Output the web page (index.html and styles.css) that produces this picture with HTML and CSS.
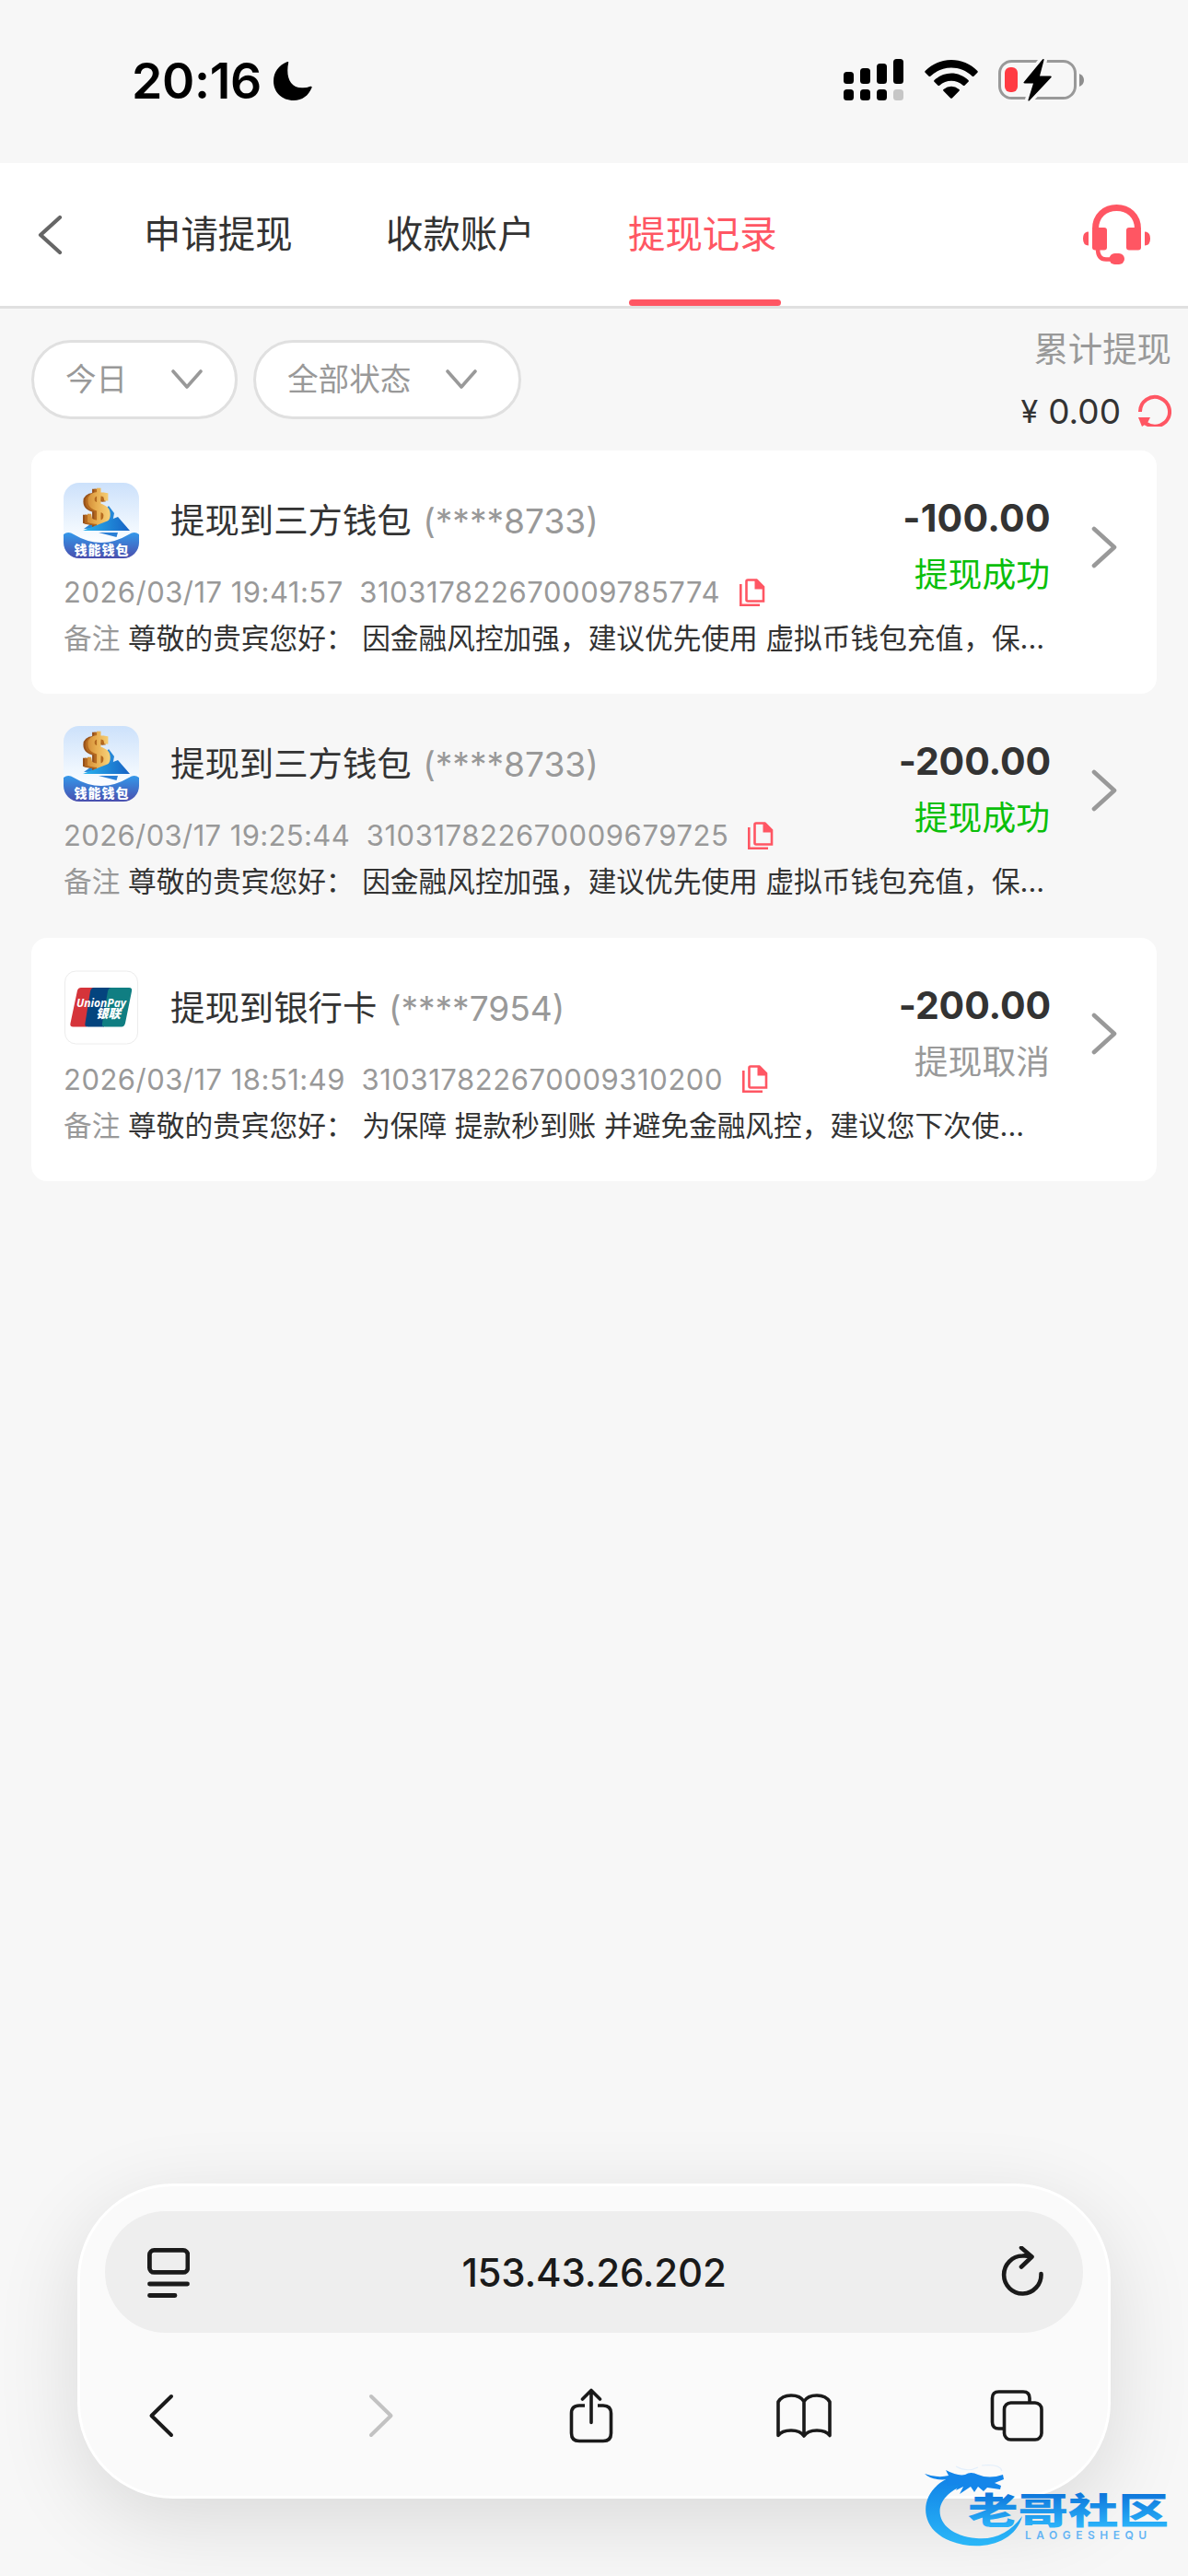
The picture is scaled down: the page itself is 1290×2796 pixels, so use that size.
FILE: index.html
```html
<!DOCTYPE html>
<html lang="zh-CN">
<head>
<meta charset="utf-8">
<title>提现记录</title>
<link rel="stylesheet" href="styles.css">
</head>
<body>
<svg class="defs" width="0" height="0" aria-hidden="true">
  <defs>
    <linearGradient id="sky" x1="0" y1="0" x2="0" y2="1"><stop offset="0" stop-color="#cce1fb"/><stop offset=".75" stop-color="#fafdff"/></linearGradient>
    <linearGradient id="wave" x1="0" y1="0" x2="0" y2="1"><stop offset="0" stop-color="#3498ea"/><stop offset="1" stop-color="#4a4fae"/></linearGradient>
    <linearGradient id="gold" x1="0" y1="0" x2="1" y2="0"><stop offset="0" stop-color="#d08a35"/><stop offset=".4" stop-color="#e8ae50"/><stop offset="1" stop-color="#f8d47c"/></linearGradient>
    <linearGradient id="sail" x1="0" y1="0" x2="1" y2="0"><stop offset="0" stop-color="#29b4ee"/><stop offset="1" stop-color="#1762c4"/></linearGradient>
    <linearGradient id="brand" gradientUnits="userSpaceOnUse" x1="0" y1="10" x2="0" y2="90"><stop offset="0" stop-color="#0f7fe6"/><stop offset="1" stop-color="#2bb8f8"/></linearGradient>
    <linearGradient id="brandText" gradientUnits="userSpaceOnUse" x1="0" y1="34" x2="0" y2="69"><stop offset="0" stop-color="#0f78dc"/><stop offset="1" stop-color="#2bb4fa"/></linearGradient>
    <symbol id="wallet" viewBox="0 0 82 82">
      <rect width="82" height="82" rx="17" fill="url(#sky)"/>
      <path d="M49 25l6 8-3 16-30 1 14-10z" fill="#2587d8"/>
      <g transform="translate(-6 -3.500) scale(1.120 1.060)">
        <text class="coin" x="35" y="46" fill="#96511b" stroke="#96511b" text-anchor="middle">$</text>
        <text class="coin" x="37" y="45.500" fill="#b56a20" stroke="#b56a20" text-anchor="middle">$</text>
        <text class="coin" x="39.500" y="45" fill="url(#gold)" stroke="url(#gold)" text-anchor="middle">$</text>
      </g>
      <path d="M21 52l38-15 13 15z" fill="url(#sail)"/>
      <path d="M38 54h21l-1.500 5z" fill="#2a7fd6"/>
      <path d="M0 56q5-4 11 0q30 18 60 0q6-4 11 0v9a17 17 0 0 1-17 17H17A17 17 0 0 1 0 65z" fill="url(#wave)"/>
      <text class="wallet-name" x="11.500" y="78.300" fill="#fff" textLength="59">钱能钱包</text>
    </symbol>
    <symbol id="copy" viewBox="0 0 28 30">
      <path d="M9 1.500H18.500L26 9V24.500H9q-1.500 0-1.500-1.500V3q0-1.500 1.500-1.500z" fill="none" stroke="#ff5663" stroke-width="2.600"/>
      <path d="M16.500 1h3L27 9v2.500H16.500z" fill="#ff5663"/>
      <path d="M1.300 6v22.700h20.700" fill="none" stroke="#ff5663" stroke-width="2.600"/>
    </symbol>
    <symbol id="next" viewBox="0 0 28 46"><path d="M3 3L25 23L3 43" fill="none" stroke="#999" stroke-width="4.600" stroke-linecap="round" stroke-linejoin="round"/></symbol>
    <symbol id="down" viewBox="0 0 34 22"><path d="M2 2L17 19L32 2" fill="none" stroke="#999" stroke-width="3.600" stroke-linecap="round" stroke-linejoin="round"/></symbol>
  </defs>
</svg>
<div class="screen">
  <div class="status">
    <span class="clock">20:16</span>
    <svg class="moon" width="42" height="42" viewBox="0 0 42 42"><path d="M16.200 1C13 16 18 29 32 28.300q4 0 8-1.500q2.200-.5 1.500 1.500C38 37 31 42 22 42C9 42 0 33 0 21C0 11 6 3.500 14.500.2q2-.8 1.700.8z"/></svg>
    <svg class="signal" width="65" height="46" viewBox="0 0 65 46"><g><rect x="0" y="14" width="11" height="13" rx="3.500"/><rect x="18" y="10" width="11" height="17" rx="3.500"/><rect x="36" y="5" width="11" height="22" rx="3.500"/><rect x="54" y="0" width="11" height="27" rx="3.500"/><rect x="0" y="33" width="11" height="12" rx="3.500"/><rect x="18" y="33" width="11" height="12" rx="3.500"/><rect x="36" y="33" width="11" height="12" rx="3.500"/><rect x="54" y="33" width="11" height="12" rx="3.500" fill="#c6c6c6"/></g></svg>
    <svg class="wifi" width="58" height="42" viewBox="0 0 58 42"><path d="M.6 12C16-4 42-4 57.400 12q.8.800 0 1.700l-4 4q-.8.800-1.700 0C39 5.500 19 5.500 6.300 17.700q-.9.800-1.700 0l-4-4q-.8-.9 0-1.700z"/><path d="M10.500 22C21 12 37 12 47.500 22q.8.900 0 1.700l-4 4q-.8.700-1.700 0C34.500 21 23.500 21 16.200 27.700q-.9.700-1.700 0l-4-4q-.8-.8 0-1.700z"/><path d="M20.500 32q8.500-6.500 17 0q.9.800 0 1.700l-7.600 7.700q-.9.900-1.800 0l-7.600-7.700q-.9-.9 0-1.700z"/></svg>
    <svg class="battery" width="94" height="46" viewBox="0 0 94 46"><rect x="1.500" y="2.500" width="82" height="40" rx="13" fill="none" stroke="#999" stroke-width="3"/><path d="M88 16q5 2 5 7t-5 7z" fill="#8e8e8e"/><rect x="7" y="9" width="14" height="27" rx="6" fill="#ff3b43"/><path d="M48 .500q2-1.500 1.500 1L45 18.500h11.500q2 0 .8 1.700L34 45q-2 1.500-1.400-1L38 26.500H29q-2.500 0-1-1.700z" fill="#000" stroke="#f7f7f7" stroke-width="7" paint-order="stroke"/></svg>
  </div>
  <header class="nav">
    <svg class="back" width="27" height="44" viewBox="0 0 27 44"><path d="M24 3L3 22L24 41" fill="none" stroke="#666" stroke-width="4.200" stroke-linecap="round" stroke-linejoin="round"/></svg>
    <nav class="tabs"><a class="tab">申请提现</a><a class="tab">收款账户</a><a class="tab active">提现记录</a></nav>
    <svg class="service" width="74" height="66" viewBox="0 0 74 66" fill="#ff5663"><path d="M14.500 27V26.500C14.500 12 25 3.500 37.500 3.500S60.500 12 60.500 26.500V27" fill="none" stroke="#ff5663" stroke-width="7"/><rect x="11" y="25" width="16" height="24.500" rx="3"/><rect x="48" y="25" width="16" height="24.500" rx="3"/><path d="M7 29.500v15Q1 44.500 1 37T7 29.500zM68 29.500v15q6 0 6-7.500T68 29.500z"/><path d="M17 48q0 11.500 9 11.500h7" fill="none" stroke="#ff5663" stroke-width="4.500"/><rect x="29.500" y="53" width="16.500" height="12" rx="6"/></svg>
  </header>
  <section class="filters">
    <button class="pill today"><span>今日</span><svg width="34" height="22"><use href="#down"/></svg></button>
    <button class="pill state"><span>全部状态</span><svg width="34" height="22"><use href="#down"/></svg></button>
    <div class="total">
      <div class="total-label">累计提现</div>
      <div class="total-value"><span class="yen">¥</span><span class="sum">0.00</span><svg width="36" height="36" viewBox="0 0 36 36"><path d="M2 20A16 16 0 1 1 29.500 31Q19 40 7 32" fill="none" stroke="#ff5663" stroke-width="4"/><path d="M0 26h13L10 32l-6 4z" fill="#ff5663"/></svg></div>
    </div>
  </section>
  <main class="list">
    <article class="record white">
      <svg class="logo" width="82" height="82"><use href="#wallet"/></svg>
      <h2 class="title">提现到三方钱包 <span class="tail">(****8733)</span></h2>
      <div class="side"><b class="amount wide">-100.00</b><span class="result ok">提现成功</span></div>
      <svg class="next" width="28" height="46"><use href="#next"/></svg>
      <p class="meta"><span class="time">2026/03/17 19:41:57</span><span class="order">310317822670009785774</span><svg width="28" height="30"><use href="#copy"/></svg></p>
      <p class="note"><span>备注</span> 尊敬的贵宾您好： 因金融风控加强，建议优先使用 虚拟币钱包充值，保...</p>
    </article>
    <article class="record">
      <svg class="logo" width="82" height="82"><use href="#wallet"/></svg>
      <h2 class="title">提现到三方钱包 <span class="tail">(****8733)</span></h2>
      <div class="side"><b class="amount">-200.00</b><span class="result ok">提现成功</span></div>
      <svg class="next" width="28" height="46"><use href="#next"/></svg>
      <p class="meta"><span class="time tight">2026/03/17 19:25:44</span><span class="order">310317822670009679725</span><svg width="28" height="30"><use href="#copy"/></svg></p>
      <p class="note"><span>备注</span> 尊敬的贵宾您好： 因金融风控加强，建议优先使用 虚拟币钱包充值，保...</p>
    </article>
    <article class="record white">
      <svg class="logo" width="82" height="82" viewBox="0 0 82 82"><rect x="1.500" y="1" width="79" height="79" rx="12" fill="#fff" stroke="#ececec"/><path d="M19 19H34L25 61.500H10.500q-4 0-3-4L15 22q1-3 4-3z" fill="#d5343a"/><path d="M33 19H53L44 61.500H26.500q-4 0-3-4L29 23q1-4 4-4z" fill="#04447e"/><path d="M52 19H71q4 0 3 4L67 57.500q-1 4-4 4H45q-4 0-3-4L48 23q1-4 4-4z" fill="#107e82"/><text class="up-latin" x="14" y="40" fill="#fff" textLength="54" lengthAdjust="spacingAndGlyphs">UnionPay</text><text class="up-cn" x="35" y="51.500" fill="#fff">银联</text></svg>
      <h2 class="title">提现到银行卡 <span class="tail">(****7954)</span></h2>
      <div class="side"><b class="amount">-200.00</b><span class="result">提现取消</span></div>
      <svg class="next" width="28" height="46"><use href="#next"/></svg>
      <p class="meta"><span class="time">2026/03/17 18:51:49</span><span class="order">310317822670009310200</span><svg width="28" height="30"><use href="#copy"/></svg></p>
      <p class="note"><span>备注</span> 尊敬的贵宾您好： 为保障 提款秒到账 并避免金融风控，建议您下次使...</p>
    </article>
  </main>
  <footer class="browser">
    <div class="address">
      <svg width="46" height="56" viewBox="0 0 46 56" fill="none" stroke="#1a1a1a" stroke-width="4.800" stroke-linecap="round"><rect x="2.400" y="4.400" width="41.500" height="24" rx="5"/><path d="M2.500 41H43.500M2.500 53.500H30"/></svg>
      <span class="host">153.43.26.202</span>
      <svg width="46" height="56" viewBox="0 0 46 56" fill="none" stroke="#1a1a1a" stroke-width="4.600" stroke-linecap="round" stroke-linejoin="round"><path d="M43.500 30A20.200 20.500 0 1 1 23.500 10.500Q28 10 32 11.500M22 1.800L33.500 11.500L22 22.500"/></svg>
    </div>
    <div class="tools">
      <svg width="28" height="54" viewBox="0 0 28 54" fill="none" stroke="#1a1a1a" stroke-width="4" stroke-linecap="round" stroke-linejoin="round"><path d="M25 6L3.500 27L25 48"/></svg>
      <svg class="forward" width="28" height="54" viewBox="0 0 28 54" fill="none" stroke="#c2c2c2" stroke-width="4" stroke-linecap="round" stroke-linejoin="round"><path d="M3 6L24.500 27L3 48"/></svg>
      <svg class="share" width="48" height="60" viewBox="0 0 48 60" fill="none" stroke="#1a1a1a" stroke-width="3.600" stroke-linecap="round" stroke-linejoin="round"><path d="M17 19H11Q2.500 19 2.500 27.500V49Q2.500 57.500 11 57.500H37Q45.500 57.500 45.500 49V27.500Q45.500 19 37 19H31" stroke-linecap="butt"/><path d="M24 37.500V2.500M14.500 12L24 2.500L33.500 12"/></svg>
      <svg class="book" width="60" height="50" viewBox="0 0 60 50" fill="none" stroke="#1a1a1a" stroke-width="3.600" stroke-linejoin="round"><path d="M30 9.500Q26 3 16 3T2 10V46.500Q6 41 16 41T30 47Q34 41 44 41T58 46.500V10Q54 3 44 3T30 9.500V47"/></svg>
      <svg class="windows" width="58" height="56" viewBox="0 0 58 56" fill="none" stroke="#1a1a1a" stroke-width="3.600"><path d="M15 42H9.500Q2.500 42 2.500 35V9Q2.500 2 9.500 2H36Q43 2 43 9V14"/><rect x="15.500" y="14" width="40.500" height="40" rx="7"/></svg>
    </div>
  </footer>
  <svg class="brand" width="270" height="92" viewBox="0 0 270 92"><path d="M36 12C-8 24-10 70 28 84C58 96 98 88 106 57Q86 84 56 81C10 77 2 38 44 23z" fill="url(#brand)"/><path d="M0 11Q14 16 26 13L23 7Q36 14 44 12Q50 8 58 12Q70 17 85 12L86 17L76 21L83 24L82 28L68 26L64 30L58 25L54 31L50 25L38 33L42 25L34 29L38 22L24 24L26 17Q8 19 0 11z" fill="#1486ea"/><path d="M34 3Q46 10 58 4M62 2Q82 0 84 8" fill="none" stroke="#e3effb" stroke-width="1.200"/><text class="brand-cn" x="47" y="65" textLength="218" lengthAdjust="spacingAndGlyphs">老哥社区</text><text class="brand-en" x="109" y="82" textLength="132">LAOGESHEQU</text></svg>
</div>
</body>
</html>
```

FILE: styles.css
```css
* { box-sizing: border-box; margin: 0; padding: 0; }
body { background: #f7f7f7; }
svg { display: block; flex: none; }
.defs { position: absolute; }
.screen {
  position: relative;
  width: 1290px;
  height: 2796px;
  overflow: hidden;
  display: flex;
  flex-direction: column;
  background: #f7f7f7;
  color: #333;
  font-family: Inter, "Noto Sans CJK SC", sans-serif;
}
.status { height: 177px; display: flex; align-items: flex-start; padding: 64px 112px 0 143px; }
.clock { width: 154px; font-size: 53.5px; font-weight: 600; line-height: 48px; letter-spacing: -0.3px; color: #000; white-space: nowrap; }
.moon { margin-top: 3px; }
.signal { margin-left: auto; }
.wifi { margin: 1px 22px 0 23px; }

.nav { height: 158px; background: #fff; border-bottom: 3px solid #e0e0e0; display: flex; align-items: center; padding: 0 41px; }
.tabs { display: flex; height: 155px; gap: 98px; margin-left: 88px; }
.tab { width: 165px; font-size: 40.4px; line-height: 155px; position: relative; white-space: nowrap; }
.active { color: #ff5663; }
.active::after { content: ""; position: absolute; left: 1px; right: -1px; bottom: 0; height: 7px; border-radius: 4px; background: #ff5663; }
.service { margin-left: auto; }

.filters { height: 154px; padding: 20px 18px 0 34px; display: flex; align-items: flex-start; }
.pill { height: 86px; margin-top: 14px; border: 3px solid #e0e0e0; border-radius: 43px; background: #fff; display: flex; align-items: center; justify-content: space-between; font: inherit; font-size: 33.6px; line-height: 50px; color: #999; }
.today { width: 224px; padding: 0 35px 0 34px; }
.state { width: 291px; margin-left: 17px; padding: 0 45px 0 34px; }
.total { margin-left: auto; display: flex; flex-direction: column; align-items: flex-end; }
.total-label { font-size: 37.4px; line-height: 50px; color: #999; }
.total-value { display: flex; align-items: center; height: 50px; margin-top: 15px; font-size: 37px; white-space: nowrap; }
.yen { font-size: 34px; margin: 2px 11px 0 0; }
.sum { margin: 2px 19px 0 0; }

.list { padding: 0 34px; }
.record {
  height: 264.4px;
  border-radius: 17px;
  padding: 35px 43px 0 35px;
  display: grid;
  grid-template-columns: 82px 1fr auto 28px;
  grid-template-rows: 82px 54px 54px;
}
.white { background: #fff; }
.title { font-size: 37.4px; font-weight: 400; line-height: 84px; margin-left: 34px; white-space: nowrap; }
.tail { margin-left: 2px; color: #999; font-size: 37.1px; }
.side { display: flex; flex-direction: column; align-items: flex-end; grid-row: 1 / 3; grid-column: 3; margin-right: 44px; }
.amount { font-size: 41px; font-weight: 700; line-height: 60px; margin-top: 8px; letter-spacing: -0.1px; }
.wide { letter-spacing: 0.3px; }
.result { font-size: 36.8px; line-height: 56px; margin: 4px 1px 0 0; color: #999; }
.ok { color: #0abf0a; }
.next { grid-row: 1 / 3; grid-column: 4; margin-top: 46.5px; }
.meta { grid-row: 2; grid-column: 1 / 4; display: flex; align-items: center; font-size: 30.96px; color: #999; white-space: nowrap; height: 73px; }
.time { letter-spacing: 0.5px; }
.tight { letter-spacing: 0.4px; }
.order { margin: 0 21px 0 17.5px; letter-spacing: 0.6px; }
.note { grid-row: 3; grid-column: 1 / 5; font-size: 30.7px; line-height: 66px; white-space: nowrap; }
.note span { color: #999; }

.browser {
  position: absolute;
  left: 84px;
  top: 2370px;
  width: 1122px;
  height: 342px;
  padding: 27px;
  border: 3px solid #fff;
  border-radius: 104px;
  background: #fafafa;
  box-shadow: 0 24px 90px rgba(0, 0, 0, 0.12);
}
.address { height: 132px; border-radius: 66px; background: #eee; display: flex; align-items: center; justify-content: space-between; padding: 0 43px 0 46px; }
.host { margin-left: -3px; font-size: 42px; font-weight: 500; letter-spacing: -0.2px; color: #1a1a1a; }
.tools { display: flex; align-items: center; height: 120px; margin-top: 30px; padding-left: 47px; }
.forward { margin-left: 211px; }
.share { margin-left: 190px; }
.book { margin-left: 177px; }
.windows { margin-left: 172px; }
.brand { position: absolute; left: 1004px; top: 2674px; }

.coin { font: bold 47px "Liberation Serif", serif; stroke-width: 1.6px; }
.wallet-name { font: 900 14px "Noto Sans CJK SC", sans-serif; }
.up-latin { font: italic bold 13px "Open Sans", sans-serif; }
.up-cn { font: italic 900 13.5px "Noto Sans CJK SC", sans-serif; }
.brand-cn { font: 900 39px "Noto Sans CJK SC", sans-serif; fill: url(#brandText); }
.brand-en { font: 600 12px Inter, sans-serif; fill: #63b4f4; }
```
